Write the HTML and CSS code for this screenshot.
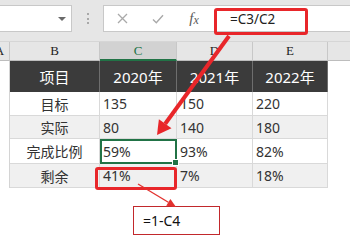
FILE: index.html
```html
<!DOCTYPE html>
<html lang="zh-CN">
<head>
<meta charset="UTF-8" />
<title>完成比例</title>
<link rel="stylesheet" href="styles.css">
</head>
<body>

<div class="toolbar">
  <div class="namebox"><span class="caret"></span></div>
  <div class="grip"></div>
  <div class="formula">
    <span class="fbtn">
      <svg width="11" height="11" viewBox="0 0 11 11"><path d="M1 1L10 10M10 1L1 10" stroke="#a9a9a9" stroke-width="1.3" fill="none"/></svg>
    </span>
    <span class="fbtn">
      <svg width="12" height="10" viewBox="0 0 12 10"><path d="M1 5.5L4.3 8.8L11 1.2" stroke="#a9a9a9" stroke-width="1.4" fill="none"/></svg>
    </span>
    <span class="fbtn fx"><i>f</i><i class="sub">x</i></span>
    <span class="ftext">=C3/C2</span>
  </div>
</div>

<div class="sheet">
  <div class="h">A</div>
  <div class="h">B</div>
  <div class="h on">C</div>
  <div class="h">D</div>
  <div class="h">E</div>
  <div class="h last"></div>

  <div class="a"></div>
  <div class="t">项目</div>
  <div class="t">2020年</div>
  <div class="t">2021年</div>
  <div class="t">2022年</div>
  <div class="r"></div>

  <div class="a"></div>
  <div class="c name">目标</div>
  <div class="c">135</div>
  <div class="c">150</div>
  <div class="c">220</div>
  <div class="r"></div>

  <div class="a"></div>
  <div class="c name alt">实际</div>
  <div class="c alt">80</div>
  <div class="c alt">140</div>
  <div class="c alt">180</div>
  <div class="r"></div>

  <div class="a"></div>
  <div class="c name">完成比例</div>
  <div class="c sel">59%</div>
  <div class="c">93%</div>
  <div class="c">82%</div>
  <div class="r"></div>

  <div class="a"></div>
  <div class="c name alt">剩余</div>
  <div class="c alt">41%</div>
  <div class="c alt">7%</div>
  <div class="c alt">18%</div>
  <div class="r"></div>
</div>

<div class="mark mark-formula"></div>
<div class="mark mark-cell"></div>
<div class="callout">=1-C4</div>

<svg class="arrows" width="350" height="248" viewBox="0 0 350 248">
  <line x1="229" y1="36" x2="165.2" y2="123.7" stroke="#e8262a" stroke-width="4"/>
  <polygon points="157,135 171.5,128.2 158.9,119.2" fill="#e8262a"/>
  <line x1="138" y1="184" x2="168.3" y2="202.3" stroke="#e2312e" stroke-width="1.3"/>
  <polygon points="176,207 166.2,205.7 170.4,198.9" fill="#e2312e"/>
</svg>

</body>
</html>
```

FILE: styles.css
```css
body {
  margin: 0;
  width: 350px;
  height: 248px;
  overflow: hidden;
  position: relative;
  background: #fff;
  font-family: "Noto Sans", "Noto Sans CJK SC", sans-serif;
}
.toolbar {
  height: 42px;
  box-sizing: border-box;
  padding-top: 5px;
  background: #e6e6e6;
  display: flex;
  align-items: flex-start;
  border-bottom: 1px solid #d6d6d6;
}
.namebox {
  width: 73px;
  height: 27px;
  margin-left: -1px;
  box-sizing: border-box;
  background: #fff;
  border: 1px solid #c8c8c8;
  display: flex;
  align-items: center;
  justify-content: flex-end;
  padding-right: 5px;
}
.caret {
  border-left: 4px solid transparent;
  border-right: 4px solid transparent;
  border-top: 4px solid #6a6a6a;
}
.grip {
  width: 0;
  height: 11px;
  margin: 8px 14px 0 15px;
  border-left: 2px dotted #a8a8a8;
}
.formula {
  flex: 1;
  height: 27px;
  box-sizing: border-box;
  background: #fff;
  border: 1px solid #c8c8c8;
  border-right: none;
  display: flex;
  align-items: center;
}
.fbtn {
  width: 36px;
  display: flex;
  justify-content: center;
  align-items: center;
}
.fx {
  font-family: "Liberation Serif", serif;
  font-size: 15px;
  color: #5a5a5a;
}
.fx .sub {
  font-size: 12px;
  position: relative;
  top: 2px;
}
.ftext {
  padding-left: 18px;
  font-size: 13.5px;
  color: #222;
}
.sheet {
  display: grid;
  grid-template-columns: 20px 90px 77px 76px 75px 1fr;
  grid-template-rows: 19px 31px 24px 23px 25px 24px;
  margin-left: -10px;
}
.sheet > div {
  box-sizing: border-box;
  display: flex;
  align-items: center;
}
.h {
  background: #e6e6e6;
  border-right: 1px solid #c8c8c8;
  border-bottom: 1px solid #bdbdbd;
  justify-content: center;
  font-family: "Liberation Serif", serif;
  font-size: 13px;
  color: #222;
}
.h.on {
  background: #d2d2d2;
  color: #217346;
  border-bottom: 2px solid #217346;
}
.h.last {
  border-right: none;
}
.a {
  border-right: 1px solid #d4d4d4;
}
.t {
  background: #3b3b3b;
  color: #fff;
  font-size: 15px;
  justify-content: center;
  border-right: 1px solid #6e6e6e;
}
.c {
  border-right: 1px solid #d9d9d9;
  border-bottom: 1px solid #d9d9d9;
  padding-left: 3px;
  font-size: 14px;
  color: #333;
}
.c.name {
  justify-content: center;
  padding-left: 0;
}
.c.alt {
  background: #f0f0f0;
}
.c.sel {
  position: relative;
  outline: 2px solid #217346;
  outline-offset: -2px;
}
.c.sel::after {
  content: "";
  position: absolute;
  right: -3px;
  bottom: -3px;
  width: 5px;
  height: 5px;
  background: #217346;
  border: 1px solid #fff;
}
.mark {
  position: absolute;
  box-sizing: border-box;
  border: 3px solid #e8262a;
  border-radius: 3px;
}
.mark-formula {
  left: 214px;
  top: 8px;
  width: 94px;
  height: 27px;
}
.mark-cell {
  left: 95px;
  top: 167px;
  width: 82px;
  height: 23px;
}
.callout {
  position: absolute;
  left: 133px;
  top: 206px;
  width: 87px;
  height: 29px;
  box-sizing: border-box;
  border: 1.5px solid #c2282c;
  background: #fff;
  padding-left: 9px;
  display: flex;
  align-items: center;
  font-size: 14px;
  color: #111;
}
.arrows {
  position: absolute;
  left: 0;
  top: 0;
  pointer-events: none;
}
```
